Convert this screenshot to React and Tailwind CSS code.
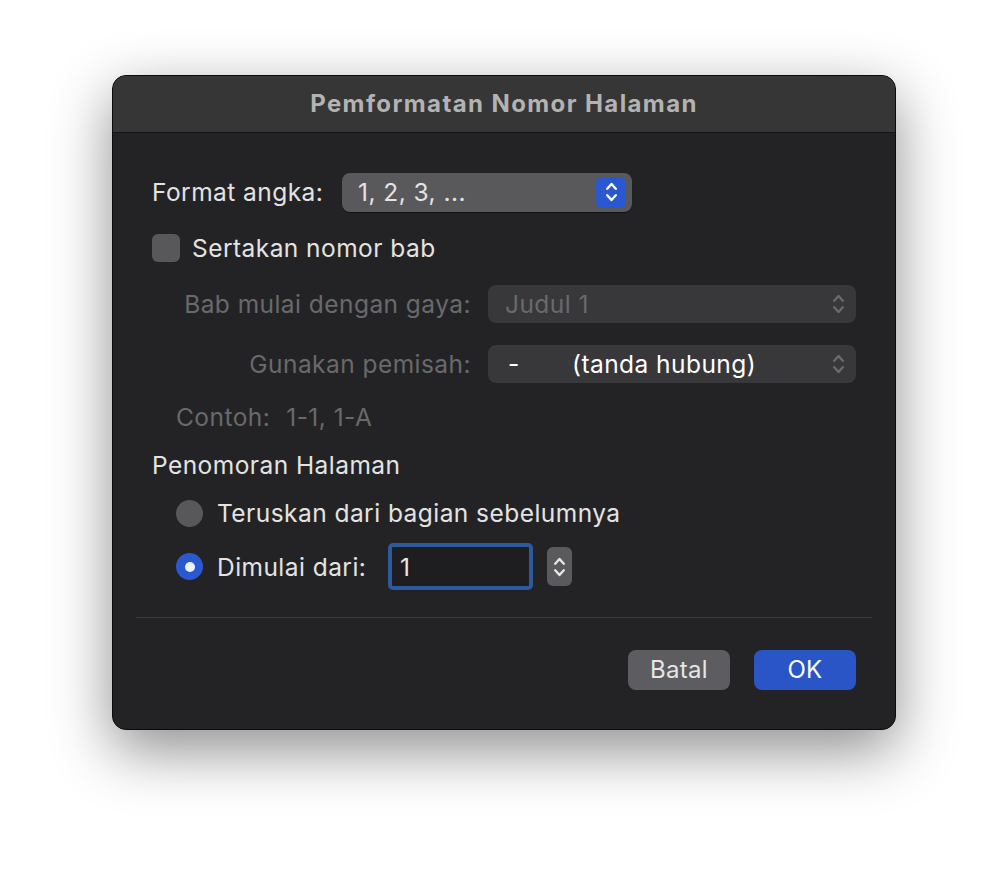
import { useState } from "react";

function Chevrons({ className = "" }) {
  return (
    <svg viewBox="0 0 14 24" className={className} fill="none" stroke="currentColor" strokeWidth="2.2" strokeLinecap="round" strokeLinejoin="round">
      <path d="M3 9 L7 4.5 L11 9" />
      <path d="M3 15 L7 19.5 L11 15" />
    </svg>
  );
}

function App() {
  const [start, setStart] = useState("1");

  return (
    <div className="min-h-screen w-full bg-white flex justify-center pt-[75px]" style={{ fontFamily: "Inter, 'Noto Sans', sans-serif" }}>
      <div className="w-[784px] h-[655px] rounded-[14px] border border-[#0b0b0b] bg-[#232325] shadow-[0_20px_60px_rgba(0,0,0,0.45)] overflow-hidden flex flex-col">
        <div className="h-[57px] bg-[#363636] border-b border-[#141414] flex items-center justify-center">
          <h1 className="text-[24px] font-bold text-[#b3b3b3] tracking-[1.4px]">Pemformatan Nomor Halaman</h1>
        </div>

        <div className="flex flex-col px-[39px] pt-[39px] text-[24.5px] leading-[30px] tracking-[0.45px] text-[#e3e3e3]">
          <div className="flex items-center h-[40px]">
            <span className="w-[190px]">Format angka:</span>
            <div className="w-[290px] h-[39px] rounded-[8px] bg-[#59595b] flex items-center justify-between pl-[16px] pr-[6px] shadow-[0_1px_1px_rgba(0,0,0,0.5)]">
              <span>1, 2, 3, ...</span>
              <div className="w-[30px] h-[31px] rounded-[6px] bg-[#2a58d0] flex items-center justify-center text-white">
                <Chevrons className="w-[15px] h-[26px]" />
              </div>
            </div>
          </div>

          <div className="flex items-center mt-[21px] h-[30px]">
            <div className="w-[28px] h-[28px] rounded-[6px] bg-[#58585a]" />
            <span className="ml-[12px]">Sertakan nomor bab</span>
          </div>

          <div className="flex items-center mt-[22px] h-[38px]">
            <span className="w-[319px] text-right text-[#69696c]">Bab mulai dengan gaya:</span>
            <div className="ml-[17px] w-[368px] h-[38px] rounded-[8px] bg-[#38383a] flex items-center justify-between pl-[17px] pr-[10px]">
              <span className="text-[#69696c]">Judul 1</span>
              <Chevrons className="w-[15px] h-[26px] text-[#6a6a6c]" />
            </div>
          </div>

          <div className="flex items-center mt-[22px] h-[38px]">
            <span className="w-[319px] text-right text-[#69696c]">Gunakan pemisah:</span>
            <div className="ml-[17px] w-[368px] h-[38px] rounded-[8px] bg-[#38383a] flex items-center justify-between pl-[20px] pr-[10px]">
              <span className="text-white">
                <span className="inline-block w-[64px]">-</span>(tanda hubung)
              </span>
              <Chevrons className="w-[15px] h-[26px] text-[#6a6a6c]" />
            </div>
          </div>

          <div className="mt-[19px] h-[30px] pl-[24px] text-[#69696c]">
            Contoh:<span className="ml-[16px]">1-1, 1-A</span>
          </div>

          <div className="mt-[18px] h-[30px]">Penomoran Halaman</div>

          <div className="flex items-center mt-[18px] h-[30px] pl-[24px]">
            <div className="w-[27px] h-[27px] rounded-full bg-[#58585a]" />
            <span className="ml-[14px]">Teruskan dari bagian sebelumnya</span>
          </div>

          <div className="flex items-center mt-[15px] h-[47px] pl-[24px]">
            <div className="w-[27px] h-[27px] rounded-full bg-[#2a58d0] flex items-center justify-center">
              <div className="w-[10px] h-[10px] rounded-full bg-[#eef0ff]" />
            </div>
            <span className="ml-[14px] w-[171px]">Dimulai dari:</span>
            <div className="w-[145px] h-[47px] rounded-[5px] border-[4px] border-[#2d5a9c] bg-[#1e1e20] flex items-center">
              <input
                value={start}
                onChange={(e) => setStart(e.target.value)}
                className="w-full bg-transparent outline-none pl-[8px] text-[#e8e8e8]"
              />
            </div>
            <div className="ml-[14px] w-[25px] h-[39px] rounded-[6px] bg-[#5a5a5c] flex items-center justify-center text-[#e6e6e6]">
              <Chevrons className="w-[15px] h-[34px]" />
            </div>
          </div>
        </div>

        <div className="mx-[23px] mt-[27px] border-t border-[#3a3a3c]" />

        <div className="flex justify-end gap-[24px] pr-[39px] mt-[32px]">
          <button className="w-[102px] h-[40px] rounded-[8px] bg-[#5d5c60] text-[24px] tracking-[0.3px] text-[#e6e6e6]">Batal</button>
          <button className="w-[102px] h-[40px] rounded-[8px] bg-[#2a55c6] text-[24px] tracking-[0.3px] text-white">OK</button>
        </div>
      </div>
    </div>
  );
}

export default App;
